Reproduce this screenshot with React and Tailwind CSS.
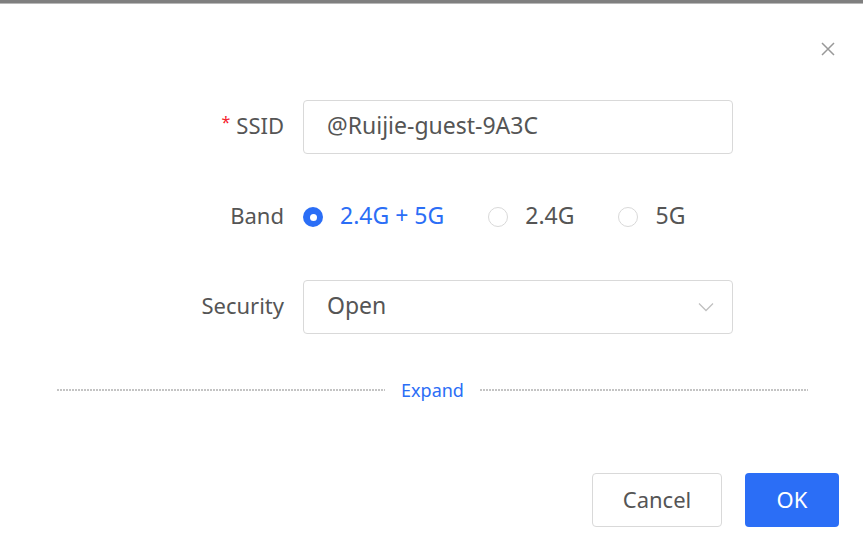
import { useState } from "react";

const font = { fontFamily: '"Noto Sans", "Open Sans", Arial, sans-serif' };

function Radio({ checked, label, onClick }) {
  return (
    <button type="button" onClick={onClick} className="flex items-center gap-[17px]">
      {checked ? (
        <span className="w-[20px] h-[20px] rounded-full bg-[#2b6ef6] flex items-center justify-center">
          <span className="w-[7px] h-[7px] rounded-full bg-white" />
        </span>
      ) : (
        <span className="w-[20px] h-[20px] rounded-full border border-[#d9d9d9] bg-white" />
      )}
      <span className={"pb-[4px] " + (checked ? "text-[#2b6ef6]" : "text-[#555]")}>{label}</span>
    </button>
  );
}

function Row({ label, required, children }) {
  return (
    <div className="flex items-center h-[54px]">
      <div className="w-[284px] text-right text-[#555] text-[22px] leading-none pb-[4px]">
        {required && <span className="text-[#f5222d] text-[16px] mr-[6px] align-top">*</span>}
        {label}
      </div>
      <div className="ml-[19px] w-[430px] h-full flex items-center">{children}</div>
    </div>
  );
}

export default function App() {
  const [band, setBand] = useState("both");

  return (
    <div className="w-[863px] h-[552px] bg-white flex flex-col overflow-hidden" style={font}>
      {/* overlay edge */}
      <div className="h-[4px] bg-[#7f7f7f] border-b border-[#b8b8b8] shrink-0" />

      <div className="flex justify-end pr-[28px] pt-[38px]">
        <button type="button" className="w-[14px] h-[14px] text-[#999]">
          <svg viewBox="0 0 14 14" width="14" height="14" fill="none" stroke="currentColor" strokeWidth="1.5">
            <path d="M1 1 L13 13 M13 1 L1 13" />
          </svg>
        </button>
      </div>

      <div className="flex flex-col gap-[36px] mt-[44px]">
        <Row label="SSID" required>
          <div className="w-full h-full border border-[#d9d9d9] rounded-[4px] flex items-center px-[23px] pb-[4px] text-[23px] text-[#555]">
            @Ruijie-guest-9A3C
          </div>
        </Row>

        <Row label="Band">
          <div className="flex items-center gap-[44px] text-[23px]">
            <Radio checked={band === "both"} label="2.4G + 5G" onClick={() => setBand("both")} />
            <Radio checked={band === "24"} label="2.4G" onClick={() => setBand("24")} />
            <Radio checked={band === "5"} label="5G" onClick={() => setBand("5")} />
          </div>
        </Row>

        <Row label="Security">
          <div className="w-full h-full border border-[#d9d9d9] rounded-[4px] flex items-center justify-between pl-[23px] pr-[18px] text-[23px] text-[#555]">
            <span className="pb-[4px]">Open</span>
            <svg viewBox="0 0 16 10" width="16" height="10" fill="none" stroke="#c0c0c0" strokeWidth="1.3">
              <path d="M1 1.5 L8 8.5 L15 1.5" />
            </svg>
          </div>
        </Row>
      </div>

      <div className="flex items-center gap-[16px] mx-[57px] w-[751px] mt-[47px]">
        <div className="flex-1 h-[2px] bg-[repeating-linear-gradient(to_right,#c4c4c4_0,#c4c4c4_2px,transparent_2px,transparent_3px)]" />
        <button type="button" className="text-[#2b6ef6] text-[18px] leading-none">Expand</button>
        <div className="flex-1 h-[2px] bg-[repeating-linear-gradient(to_right,#c4c4c4_0,#c4c4c4_2px,transparent_2px,transparent_3px)]" />
      </div>

      <div className="flex justify-end gap-[23px] pr-[24px] mt-[74px]">
        <button type="button" className="w-[130px] h-[54px] border border-[#d9d9d9] rounded-[4px] text-[22px] text-[#555] bg-white pb-[2px]">
          Cancel
        </button>
        <button type="button" className="w-[94px] h-[54px] rounded-[4px] text-[22px] text-white bg-[#2b6ef6] pb-[2px]">
          OK
        </button>
      </div>
    </div>
  );
}
